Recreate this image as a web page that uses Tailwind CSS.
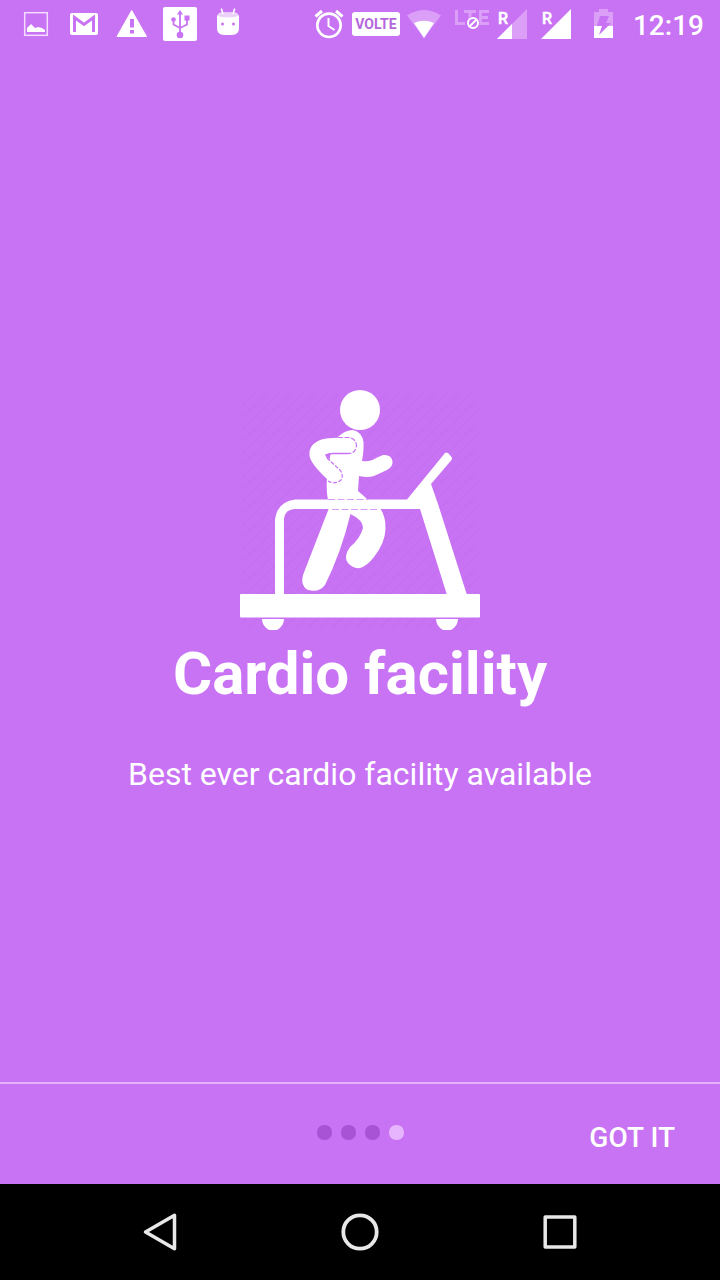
<!DOCTYPE html>
<html lang="en">
<head>
<meta charset="utf-8">
<meta name="viewport" content="width=device-width, initial-scale=1">
<title>Cardio facility</title>
<script src="https://cdn.jsdelivr.net/npm/@tailwindcss/browser@4"></script>
</head>
<body class="min-h-screen flex flex-col bg-[#c872f4] text-white font-['Roboto',sans-serif]">
<header class="flex h-12 items-center justify-between pl-3 pr-4">
  <div class="flex">
    <svg class="w-12 h-12" viewBox="12 0 48 48" fill="#fff"><rect x="24.7" y="12.7" width="22.6" height="22.6" fill="none" stroke="#f3dcfd" stroke-width="1.5"/><path d="M27 32v-4l4-4 4 4 3-1 4 1 3 2v2z"/></svg>
    <svg class="w-12 h-12" viewBox="60 0 48 48"><rect x="70" y="13" width="28" height="22" rx="2" fill="#fff"/><path d="M74.500 32V17.500L84 24.500l9.500-7V32" fill="none" stroke="#c872f4" stroke-width="3"/></svg>
    <svg class="w-12 h-12" viewBox="108 0 48 48"><path d="M131.700 10.500L146.500 36.500h-29.500z" fill="#fff" stroke="#fff" stroke-width="1" stroke-linejoin="round"/><path d="M130 19h4v8.500h-4zM130 30h4v3.500h-4z" fill="#c872f4"/></svg>
    <svg class="w-12 h-12" viewBox="156 0 48 48"><rect x="163" y="7" width="34" height="34" rx="2" fill="#fff"/><g fill="#c872f4"><circle cx="180" cy="35" r="3.300"/><path d="M180 10l3 4.500h-6z"/><rect x="184.500" y="15.500" width="5" height="5"/><circle cx="173.500" cy="19.500" r="2.300"/></g><path d="M180 13v21M173.500 20v4.500l6.500 3.500M187 19v5.500l-7 3.500" fill="none" stroke="#c872f4" stroke-width="1.800"/></svg>
    <svg class="w-12 h-12" viewBox="204 0 48 48"><path d="M217 17q0-3 4-4.500h14q4 1.500 4 4.500v11q0 7-7 7h-8q-7 0-7-7z" fill="#fff"/><path d="M218 16q0-3 3.500-3.500h13q3.500.5 3.500 3.500-10 3-20 0z" fill="#ecd1fb"/><path d="M223 14l-1.700-5.500M233 14l1.700-5.500" stroke="#fff" stroke-width="1.500"/><circle cx="222.500" cy="24" r="1.500" fill="#c872f4"/><circle cx="233.500" cy="24" r="1.500" fill="#c872f4"/></svg>
  </div>
  <div class="flex items-center">
    <svg class="w-9 h-12" viewBox="312 0 36 48" fill="none" stroke="#fff" stroke-width="2.600"><circle cx="329" cy="25.300" r="11.700"/><path d="M328.500 18v8l6 4" stroke-width="2"/><path d="M315.500 16.500l6.500-5.500M342.500 16.500l-6.500-5.500" stroke-width="3"/></svg>
    <span class="ml-1 flex h-6 w-12 items-center justify-center rounded-[3px] bg-white text-[14px] font-bold text-[#b566dd]">VOLTE</span>
    <svg class="ml-1 w-10 h-12" viewBox="404 0 40 48"><path d="M407 15.500Q424 4.500 441 15.500L424 38z" fill="#db9ff8"/><path d="M414 23Q424 18.500 434 23L424 38z" fill="#fff"/></svg>
    <svg class="ml-2 w-10 h-12" viewBox="452 0 40 48" fill="none"><path d="M456.500 10v13.500h8.500M464 11.500h12M470 11.500v13.500M489 11.500h-8.500v12H489M480 17.500h8" stroke="#db9ff8" stroke-width="3"/><circle cx="473" cy="23" r="6.500" fill="#c872f4"/><circle cx="473" cy="23" r="5" stroke="#fff" stroke-width="2"/><path d="M469.500 26.500l7-7" stroke="#fff" stroke-width="2"/></svg>
    <svg class="w-10 h-12" viewBox="492 0 40 48"><path d="M527 9v30H497z" fill="#db9ff8"/><path d="M512 24v15H497z" fill="#fff"/><text x="498" y="24" font-size="16" font-weight="500" fill="#fff" stroke="#fff" stroke-width=".5">R</text></svg>
    <svg class="ml-1 w-10 h-12" viewBox="536 0 40 48" fill="#fff"><path d="M571 9v30H541z"/><text x="542" y="24" font-size="16" font-weight="500" stroke="#fff" stroke-width=".5">R</text></svg>
    <svg class="ml-3 w-8 h-12" viewBox="588 0 32 48"><path d="M594 12h5V9h9v3h5v14h-19z" fill="#db9ff8"/><path d="M594 26h19v12h-19z" fill="#fff"/><path d="M600 16h9l-3 7h5l-12 12 3-9h-5z" fill="#c872f4"/></svg>
    <time class="ml-[13px] pt-1 text-[28px] leading-8 font-medium">12:19</time>
  </div>
</header>

<main class="flex flex-1 flex-col items-center justify-center pt-[54px] text-center">
  <svg class="size-60" viewBox="240 390 240 240" fill="#fff" role="img" aria-label="Person running on a treadmill">
    <defs><pattern id="stripes" width="12" height="12" patternUnits="userSpaceOnUse"><path d="M-3 3L3-3M-1 13L13-1M9 15l6-6" stroke="#bd6deb" stroke-width="2" opacity=".35"/></pattern></defs>
    <rect x="243" y="393" width="235" height="235" fill="url(#stripes)"/>
    <circle cx="360" cy="410" r="20"/>
    <path d="M338 437Q345 430 353 430Q362 432 363.500 442Q364 450 362 461Q370 462 376 458L383 455Q391 454 392.500 461Q393 467 387 470L374 476Q367 478 359 476L358 491Q364 496 368 500H328Q326 490 327 478L331 450z"/>
    <path d="M349 438Q325 437 318 441Q308 446 309.500 456Q311 464 327 479Q331 484 337 483Q343 480 342.500 474L330 460Q325 454 330 453.500H349Q356 452 356.500 446Q356 438 349 438z"/>
    <g fill="none" stroke="#c872f4" stroke-width="1.200"><path d="M338 437.500h11Q356.500 439 356.500 446Q355 453.500 349 453.500" stroke-dasharray="5 1.500"/><path d="M349 453.500h-16q-4 0-7 1.500l2 4" stroke-width="1.500"/><path d="M327 458l13 12Q344 475 341 480Q335 485 328 481" stroke-dasharray="4 1.500"/></g>
    <path d="M326 455q2-2 5-1.500-2 2-1 6z" fill="#c872f4"/>
    <path d="M329 508L303 575Q300 586 308 590Q319 593 325 585Q341 553 350.500 514Q363 520 363 528Q360 539 350 547Q343 557 348 563Q353 569 360 568Q367 566 374 557Q385 543 385.500 529Q386 517 380 508z"/>
    <path d="M275 595V520Q277 502 295 499.500H407L445 453q2-1.500 4 1l2.500 3q1 1.500 0 3L431 484L438 504L467 595H447L420 509H295Q285 509 284 519V595z"/>
    <path d="M328 499.500h40M332 509.500h46" stroke="#d99df7" stroke-width="1.200" stroke-dasharray="7 2.500"/>
    <rect x="240" y="594" width="240" height="23.500" rx="1"/>
    <path d="M262 619h22q0 7-7 11h-8q-7-4-7-11zM436 619h22q0 7-7 11h-8q-7-4-7-11z"/>
  </svg>
  <h1 class="text-[60px] leading-[88px] font-bold">Cardio facility</h1>
  <p class="mt-9 text-[32px] leading-10">Best ever cardio facility available</p>
</main>

<footer class="grid h-[102px] grid-cols-3 items-center border-t-2 border-[#e3b4fa]">
  <div class="col-start-2 flex justify-center gap-[9px] pb-1">
    <span class="size-[15px] rounded-[7px] bg-[#a852d5]"></span>
    <span class="size-[15px] rounded-[7px] bg-[#a852d5]"></span>
    <span class="size-[15px] rounded-[7px] bg-[#a852d5]"></span>
    <span class="size-[15px] rounded-[7px] bg-[#e6b5fd]"></span>
  </div>
  <button type="button" class="mr-[45px] justify-self-end pt-2 text-[28px] leading-8 font-medium">GOT IT</button>
</footer>

<nav class="flex h-24 items-center justify-center gap-[152px] bg-black">
  <button type="button" aria-label="Back"><svg class="size-12" viewBox="136 1208 48 48" fill="none" stroke="#e8e8e8" stroke-width="3.500" stroke-linejoin="round"><path d="M174.500 1215.300v33.400L145.500 1232z"/></svg></button>
  <button type="button" aria-label="Home"><svg class="size-12" viewBox="336 1208 48 48" fill="none" stroke="#e8e8e8" stroke-width="3.800"><circle cx="360" cy="1232" r="16.700"/></svg></button>
  <button type="button" aria-label="Recent apps"><svg class="size-12" viewBox="536 1208 48 48" fill="none" stroke="#e8e8e8" stroke-width="3.500" stroke-linejoin="round"><rect x="545.200" y="1217" width="29.600" height="30"/></svg></button>
</nav>
</body>
</html>
